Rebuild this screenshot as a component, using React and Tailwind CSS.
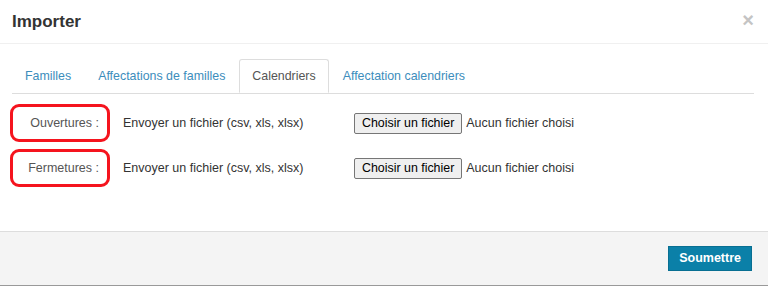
import React from 'react';

const font = { fontFamily: '"Liberation Sans", Arial, sans-serif' };

// Tab link in the nav bar
const Tab = ({ label, active }) => (
    <div
        className={
            active
                ? 'px-3 h-[34px] flex items-center text-[12.4px] text-[#555] bg-white border border-[#ddd] border-b-white rounded-t-[3px] -mb-px mr-[1px]'
                : 'px-3 h-[34px] flex items-center text-[12.4px] text-[#3c8dbc] mr-[1px] border border-transparent'
        }
    >
        {label}
    </div>
);

// Fake file input (browser locale would otherwise show English)
const FileRow = ({ label }) => (
    <div className="flex items-center h-[38px]">
        <div className="w-[100px] h-[38px] border-[3px] border-[#f5141e] rounded-[9px] flex items-center justify-end pr-[8px] text-[12.5px] text-[#555]">
            {label}
        </div>
        <div className="ml-[13px] w-[231px] text-[12.5px] text-[#333]">Envoyer un fichier (csv, xls, xlsx)</div>
        <div className="flex items-center">
            <span className="h-[21px] px-[7px] flex items-center bg-[#efefef] border border-[#767676] rounded-[2px] text-[12.4px] text-black">
                Choisir un fichier
            </span>
            <span className="ml-[4px] text-[12.5px] text-[#333]">Aucun fichier choisi</span>
        </div>
    </div>
);

const App = () => {
    return (
        <div className="w-[768px] h-[286px] bg-white flex flex-col overflow-hidden" style={font}>
            {/* Header */}
            <div className="h-[44px] shrink-0 border-b border-[#f0f0f0] flex items-center justify-between pl-3 pr-[14px]">
                <h1 className="text-[17px] font-bold text-[#333]">Importer</h1>
                <span className="text-[20px] leading-none font-bold text-[#c4c4c4] -mt-[3px]">×</span>
            </div>

            {/* Body */}
            <div className="flex-1 pl-3 pr-[14px] pt-[15px]">
                <div className="flex border-b border-[#ddd]">
                    <Tab label="Familles" />
                    <Tab label="Affectations de familles" />
                    <Tab label="Calendriers" active />
                    <Tab label="Affectation calendriers" />
                </div>
                <div className="flex flex-col gap-[7px] mt-[10px] -ml-[2px]">
                    <FileRow label="Ouvertures :" />
                    <FileRow label="Fermetures :" />
                </div>
            </div>

            {/* Footer */}
            <div className="h-[55px] shrink-0 bg-[#f4f4f4] border-t border-[#ddd] border-b border-b-[#999] flex items-center justify-end pr-[16px]">
                <button className="h-[25px] px-[10px] bg-[#0b80a8] border border-[#086f92] text-white text-[12.5px] font-bold">
                    Soumettre
                </button>
            </div>
        </div>
    );
};

export default App;
